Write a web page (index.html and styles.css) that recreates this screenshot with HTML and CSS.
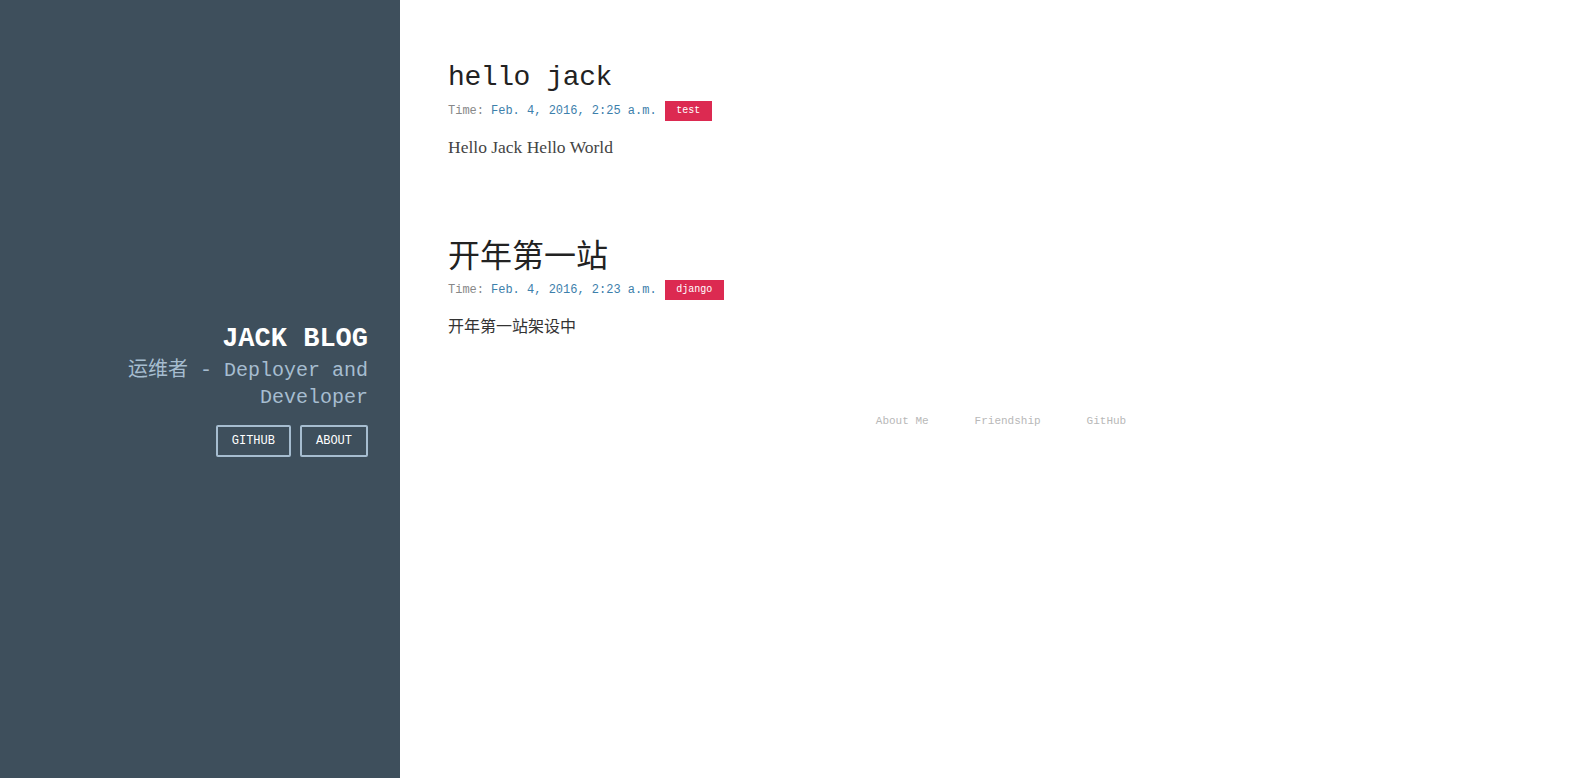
FILE: index.html
```html
<!DOCTYPE html>
<html lang="zh-CN">
<head>
<meta charset="utf-8">
<title>Jack Blog</title>
<link rel="stylesheet" href="styles.css">
</head>
<body>
<div class="layout">
  <aside class="sidebar">
    <div class="brand">
      <h1 class="brand-title">JACK BLOG</h1>
      <p class="brand-sub">运维者 - Deployer and Developer</p>
      <nav class="brand-nav">
        <a class="btn" href="#">GITHUB</a>
        <a class="btn" href="#">ABOUT</a>
      </nav>
    </div>
  </aside>
  <main class="content">
    <article class="post">
      <h2 class="post-title">hello jack</h2>
      <div class="post-meta">
        <span class="meta-label">Time:</span>
        <span class="meta-date">Feb. 4, 2016, 2:25 a.m.</span>
        <a class="tag" href="#">test</a>
      </div>
      <p class="post-body">Hello Jack Hello World</p>
    </article>
    <article class="post">
      <h2 class="post-title cjk">开年第一站</h2>
      <div class="post-meta">
        <span class="meta-label">Time:</span>
        <span class="meta-date">Feb. 4, 2016, 2:23 a.m.</span>
        <a class="tag" href="#">django</a>
      </div>
      <p class="post-body cjk">开年第一站架设中</p>
    </article>
    <footer class="footer">
      <a href="#">About Me</a>
      <a href="#">Friendship</a>
      <a href="#">GitHub</a>
    </footer>
  </main>
</div>
</body>
</html>
```

FILE: styles.css
```css
* { box-sizing: border-box; }
html, body { margin: 0; padding: 0; height: 100%; }
body {
  font-family: "Liberation Mono", "Noto Sans CJK SC", monospace;
  background: #fff;
  color: #222;
}
a { text-decoration: none; }

.layout {
  display: flex;
  min-height: 100vh;
}

.sidebar {
  width: 400px;
  flex: 0 0 400px;
  background: #3e4f5c;
  display: flex;
  align-items: center;
  justify-content: flex-end;
  padding: 0 32px 0 80px;
  min-height: 778px;
}
.brand {
  text-align: right;
  width: 100%;
}
.brand-title {
  margin: 0;
  font-size: 27px;
  line-height: 36px;
  font-weight: bold;
  color: #fff;
}
.brand-sub {
  margin: 0;
  font-size: 20px;
  line-height: 27px;
  color: #a6bdd0;
}
.brand-nav {
  display: flex;
  justify-content: flex-end;
  gap: 9px;
  margin-top: 14px;
}
.btn {
  display: inline-flex;
  align-items: center;
  height: 32px;
  padding: 0 14px;
  border: 2px solid #a6bdd0;
  border-radius: 2px;
  color: #fff;
  font-size: 12px;
}

.content {
  flex: 1;
  padding: 58px 20px 40px 48px;
}
.post + .post { margin-top: 74px; }
.post-title {
  margin: 0;
  font-size: 28px;
  line-height: 40px;
  font-weight: normal;
  color: #222;
  letter-spacing: -0.4px;
}
.post-title.cjk {
  font-family: "Noto Sans CJK SC", sans-serif;
  font-size: 32px;
  letter-spacing: 0;
  margin-bottom: 7px;
}
.post-meta {
  margin-top: 3px;
  display: flex;
  align-items: center;
  height: 20px;
  font-size: 12px;
}
.meta-label { color: #888; }
.meta-date { color: #3d80ab; margin-left: 7px; }
.tag {
  margin-left: 8px;
  background: #dc2a51;
  color: #fff;
  font-size: 10px;
  height: 20px;
  line-height: 20px;
  padding: 0 11.5px;
}
.post-body {
  margin: 14px 0 0;
  font-family: "Liberation Serif", "Noto Sans CJK SC", serif;
  font-size: 17.5px;
  line-height: 24px;
  color: #444;
}
.post-body.cjk {
  margin-top: 13px;
  font-family: "Noto Sans CJK SC", sans-serif;
  font-size: 16px;
  color: #333;
}

.footer {
  margin-top: 74px;
  display: flex;
  justify-content: center;
  gap: 46px;
  padding-left: 4px;
  line-height: 20px;
  font-size: 11px;
}
.footer a { color: #b8b8b8; }
```
